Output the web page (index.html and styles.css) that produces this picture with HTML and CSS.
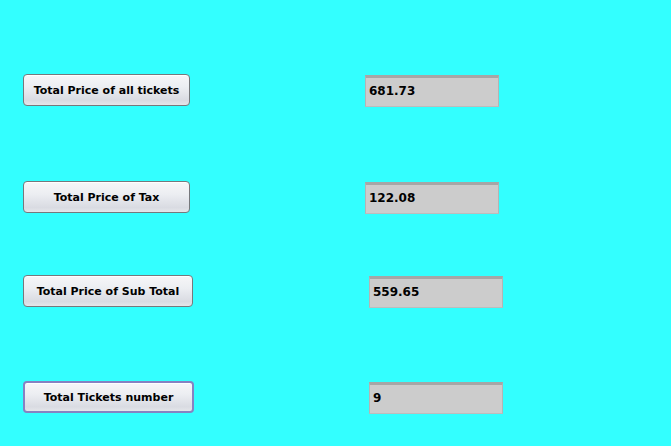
FILE: index.html
```html
<!DOCTYPE html>
<html>
<head>
<meta charset="utf-8">
<link rel="stylesheet" href="styles.css">
</head>
<body>
<div class="panel">
  <div class="row row-1">
    <button class="btn btn-a">Total Price of all tickets</button>
    <div class="field field-a">681.73</div>
  </div>
  <div class="row row-2">
    <button class="btn btn-a">Total Price of Tax</button>
    <div class="field field-a">122.08</div>
  </div>
  <div class="row row-3">
    <button class="btn btn-b">Total Price of Sub Total</button>
    <div class="field field-b">559.65</div>
  </div>
  <div class="row row-4">
    <button class="btn btn-c focused">Total Tickets number</button>
    <div class="field field-c">9</div>
  </div>
</div>
</body>
</html>
```

FILE: styles.css
```css
html, body {
  margin: 0;
  padding: 0;
  background: #33ffff;
}
body {
  width: 671px;
  height: 446px;
  overflow: hidden;
  font-family: "DejaVu Sans", "Liberation Sans", sans-serif;
}
.panel {
  display: flex;
  flex-direction: column;
  padding-left: 23px;
}
.row {
  display: flex;
  align-items: flex-start;
}
.row-1 { margin-top: 74px; }
.row-2 { margin-top: 74px; }
.row-3 { margin-top: 61px; }
.row-4 { margin-top: 73px; }

.btn {
  box-sizing: border-box;
  height: 32px;
  margin: 0;
  padding: 0;
  border: 1px solid #76787c;
  border-radius: 4px;
  background: linear-gradient(to bottom, #f6f6f8 0%, #eceef2 40%, #d9dbe2 85%, #e4e6ea 100%);
  font-family: "DejaVu Sans", "Liberation Sans", sans-serif;
  font-weight: bold;
  font-size: 11px;
  color: #000;
  text-align: center;
  box-shadow: inset 0 1px 0 #ffffff;
}
.btn-a { width: 167px; }
.btn-b { width: 170px; }
.btn-c { width: 171px; }
.focused {
  border: 2px solid #8682c2;
}

.field {
  box-sizing: border-box;
  width: 134px;
  height: 32px;
  margin-top: 1px;
  background: #cccccc;
  border-top: 3px solid #a6a6a6;
  border-left: 1px solid #b4b4b4;
  border-right: 1px solid #b4b4b4;
  border-bottom: 1px solid #bcbcbc;
  padding-left: 3px;
  font-weight: bold;
  font-size: 12px;
  color: #000;
  display: flex;
  align-items: center;
  padding-bottom: 2px;
}
.field-a { margin-left: 175px; }
.field-b { margin-left: 176px; }
.field-c { margin-left: 175px; }
```
